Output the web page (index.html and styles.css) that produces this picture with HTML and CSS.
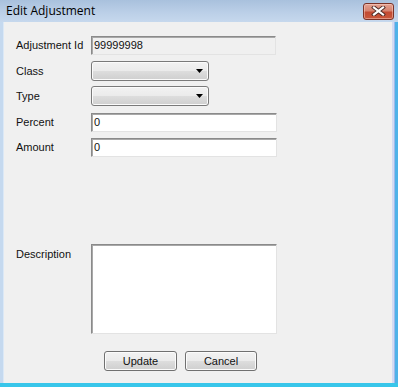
FILE: index.html
```html
<!DOCTYPE html>
<html>
<head>
<meta charset="utf-8">
<link rel="stylesheet" href="styles.css">
</head>
<body>
<div class="window">
  <div class="titlebar">
    <span class="title">Edit Adjustment</span>
    <div class="close">
      <svg width="15" height="10" viewBox="0 0 15 10">
        <path d="M3 1.5 L12 8.5 M12 1.5 L3 8.5" stroke="#4a2a26" stroke-width="4" stroke-linecap="square"/>
        <path d="M3 1.5 L12 8.5 M12 1.5 L3 8.5" stroke="#ffffff" stroke-width="2.2" stroke-linecap="square"/>
      </svg>
    </div>
  </div>
  <div class="middle">
    <div class="edge-left"></div>
    <div class="client">
      <div class="row r1">
        <label class="lbl">Adjustment Id</label>
        <div class="field readonly w185">99999998</div>
      </div>
      <div class="row r2">
        <label class="lbl">Class</label>
        <div class="combo">
          <svg class="arrow" width="7" height="4" viewBox="0 0 7 4"><path d="M0 0 H7 L3.5 4 Z" fill="#000"/></svg>
        </div>
      </div>
      <div class="row r3">
        <label class="lbl">Type</label>
        <div class="combo">
          <svg class="arrow" width="7" height="4" viewBox="0 0 7 4"><path d="M0 0 H7 L3.5 4 Z" fill="#000"/></svg>
        </div>
      </div>
      <div class="row r4">
        <label class="lbl">Percent</label>
        <div class="field w186">0</div>
      </div>
      <div class="row r5">
        <label class="lbl">Amount</label>
        <div class="field w186">0</div>
      </div>
      <div class="row r6 top">
        <label class="lbl desc">Description</label>
        <div class="field area w186"></div>
      </div>
      <div class="buttons">
        <div class="btn w73">Update</div>
        <div class="btn w72">Cancel</div>
      </div>
    </div>
    <div class="edge-right"></div>
  </div>
  <div class="edge-bottom"></div>
</div>
</body>
</html>
```

FILE: styles.css
```css
html, body {
  margin: 0;
  padding: 0;
  background: #f0f0f0;
}

.window {
  width: 398px;
  height: 387px;
  display: flex;
  flex-direction: column;
  background: #c3d6ec;
  font-family: "Liberation Sans", Arial, sans-serif;
  font-size: 11px;
  color: #111;
}

.titlebar {
  height: 22px;
  flex: none;
  display: flex;
  align-items: center;
  justify-content: space-between;
  padding: 0 4px 0 6px;
  background: linear-gradient(to bottom, #a9c1dd 0%, #bcd0e8 60%, #c6d8ed 100%);
}

.title {
  font-family: "Open Sans", "Noto Sans", sans-serif;
  font-size: 12px;
  color: #000;
  margin-top: -1px;
}

.close {
  width: 29px;
  height: 15px;
  margin-top: 0;
  border: 1px solid #7b3328;
  border-radius: 3px;
  background: linear-gradient(to bottom, #e3a292 0%, #d68370 45%, #c24a32 55%, #c9583c 100%);
  display: flex;
  align-items: center;
  justify-content: center;
  box-shadow: inset 0 0 0 1px rgba(255, 220, 210, 0.45);
}

.middle {
  flex: 1;
  display: flex;
}

.edge-left {
  width: 4px;
  background: linear-gradient(to right, #c5d9ef 0 3px, #dbe8f6 3px 4px);
}

.edge-right {
  width: 6px;
  background: linear-gradient(to right, #d3dbf3 0 2px, #9fb9ea 2px 3px, #4fb2e8 3px 6px);
}

.edge-bottom {
  height: 4px;
  flex: none;
  background: #38c6ea;
}

.client {
  flex: 1;
  background: #f0f0f0;
  padding: 14px 0 0 12px;
  display: flex;
  flex-direction: column;
}

.row {
  display: flex;
  align-items: center;
}

.row.top {
  align-items: flex-start;
}

.r2 { margin-top: 6px; }
.r3 { margin-top: 5px; }
.r4 { margin-top: 7px; }
.r5 { margin-top: 6px; }
.r6 { margin-top: 87px; }

.lbl {
  width: 75px;
  flex: none;
  line-height: 13px;
}

.lbl.desc {
  padding-top: 4px;
}

.field {
  box-sizing: border-box;
  height: 19px;
  background: #fff;
  border-style: solid;
  border-width: 1px;
  border-color: #8a8a8a #e3e3e3 #e3e3e3 #8a8a8a;
  box-shadow: inset 1px 1px 0 #a8a8a8;
  padding: 2px 0 0 2px;
  line-height: 13px;
}

.field.readonly {
  background: #f0f0f0;
}

.field.area {
  height: 90px;
}

.w185 { width: 185px; }
.w186 { width: 186px; }
.w73 { width: 73px; }
.w72 { width: 72px; }

.combo {
  box-sizing: border-box;
  width: 118px;
  height: 20px;
  border: 1px solid #7a7a7a;
  border-radius: 3px;
  background: linear-gradient(to bottom, #f2f2f2 0%, #ebebeb 48%, #dddddd 52%, #cfcfcf 100%);
  box-shadow: inset 0 0 0 1px #fbfbfb;
  display: flex;
  align-items: center;
  justify-content: flex-end;
  padding-right: 5px;
}

.arrow {
  display: block;
}

.buttons {
  display: flex;
  gap: 8px;
  margin-top: 17px;
  margin-left: 88px;
}

.btn {
  box-sizing: border-box;
  height: 20px;
  border: 1px solid #707070;
  border-radius: 3px;
  background: linear-gradient(to bottom, #f2f2f2 0%, #ebebeb 48%, #dddddd 52%, #cfcfcf 100%);
  box-shadow: inset 0 0 0 1px #fbfbfb;
  display: flex;
  align-items: center;
  justify-content: center;
  line-height: 13px;
}
```
